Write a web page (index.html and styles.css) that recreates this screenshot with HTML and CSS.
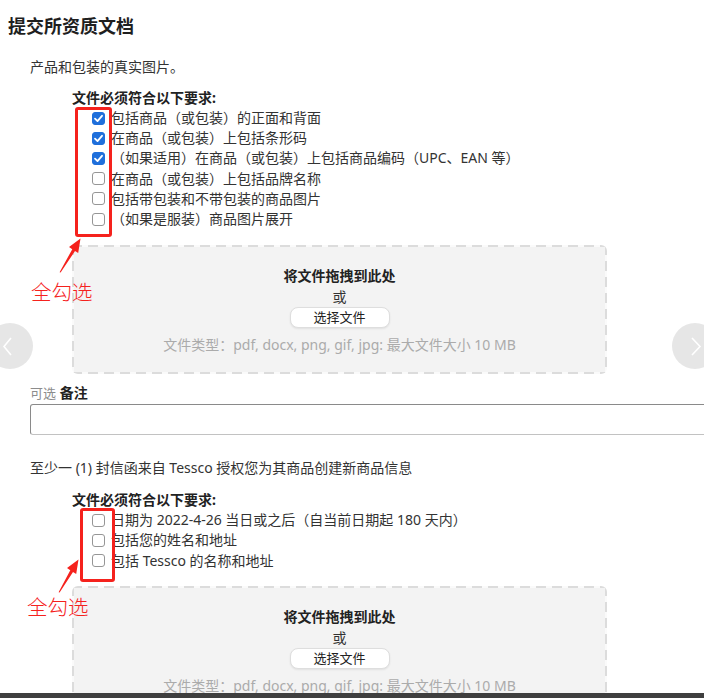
FILE: index.html
```html
<!DOCTYPE html>
<html lang="zh-CN">
<head>
<meta charset="utf-8">
<title>提交所资质文档</title>
<link rel="stylesheet" href="styles.css">
</head>
<body>
<div class="page">
  <h1 class="title">提交所资质文档</h1>

  <section class="doc">
    <p class="desc">产品和包装的真实图片。</p>
    <div class="reqs">
      <div class="reqs-title">文件必须符合以下要求:</div>
      <ul class="checklist">
        <li><span class="box checked"><svg viewBox="0 0 13 13" width="13" height="13"><polyline points="3,6.6 5.5,9.1 10,3.8" /></svg></span><span>包括商品（或包装）的正面和背面</span></li>
        <li><span class="box checked"><svg viewBox="0 0 13 13" width="13" height="13"><polyline points="3,6.6 5.5,9.1 10,3.8" /></svg></span><span>在商品（或包装）上包括条形码</span></li>
        <li><span class="box checked"><svg viewBox="0 0 13 13" width="13" height="13"><polyline points="3,6.6 5.5,9.1 10,3.8" /></svg></span><span>（如果适用）在商品（或包装）上包括商品编码（UPC、EAN 等）</span></li>
        <li><span class="box"></span><span>在商品（或包装）上包括品牌名称</span></li>
        <li><span class="box"></span><span>包括带包装和不带包装的商品图片</span></li>
        <li><span class="box"></span><span>（如果是服装）商品图片展开</span></li>
      </ul>
    </div>
    <div class="dropzone">
      <div class="dz-title">将文件拖拽到此处</div>
      <div class="dz-or">或</div>
      <button class="dz-btn" type="button">选择文件</button>
      <div class="dz-types">文件类型：pdf, docx, png, gif, jpg: 最大文件大小 10 MB</div>
    </div>
  </section>

  <section class="note">
    <div class="note-label"><span class="optional">可选</span> <b>备注</b></div>
    <input class="note-input" type="text">
  </section>

  <section class="doc doc-letter">
    <p class="desc">至少一 (1) 封信函来自 Tessco 授权您为其商品创建新商品信息</p>
    <div class="reqs">
      <div class="reqs-title">文件必须符合以下要求:</div>
      <ul class="checklist">
        <li><span class="box"></span><span>日期为 2022-4-26 当日或之后（自当前日期起 180 天内）</span></li>
        <li><span class="box"></span><span>包括您的姓名和地址</span></li>
        <li><span class="box"></span><span>包括 Tessco 的名称和地址</span></li>
      </ul>
    </div>
    <div class="dropzone">
      <div class="dz-title">将文件拖拽到此处</div>
      <div class="dz-or">或</div>
      <button class="dz-btn" type="button">选择文件</button>
      <div class="dz-types">文件类型：pdf, docx, png, gif, jpg: 最大文件大小 10 MB</div>
    </div>
  </section>

  <!-- annotations -->
  <div class="mark mark-1"></div>
  <div class="mark mark-2"></div>
  <svg class="arrows" width="704" height="698" viewBox="0 0 704 698">
    <polygon points="80.5,238.5 69,247 72.3,249.2 59.6,272.2 60.6,272.6 75,251 78.2,253" />
    <polygon points="78.5,559.5 67,568 70.3,570.2 58.6,592.2 59.6,592.6 73,572 76.2,574" />
  </svg>
  <div class="mark-label mark-label-1">全勾选</div>
  <div class="mark-label mark-label-2">全勾选</div>

  <!-- carousel nav -->
  <div class="nav nav-prev"><svg width="46" height="46" viewBox="0 0 46 46"><path d="M24 15 L17 23.5 L24 32" /></svg></div>
  <div class="nav nav-next"><svg width="46" height="46" viewBox="0 0 46 46"><path d="M20 15 L28 23.5 L20 32" /></svg></div>

  <div class="bottom-bar"></div>
</div>
</body>
</html>
```
FILE: styles.css
```css
html, body {
  margin: 0;
  padding: 0;
  overflow: hidden;
  background: #fff;
}

body {
  font-family: "Noto Sans", "Noto Sans CJK SC", sans-serif;
  font-size: 14px;
  color: #333;
}

.page {
  position: relative;
  width: 704px;
  height: 698px;
  overflow: hidden;
}

.title {
  margin: 0;
  padding: 14px 0 0 8px;
  font-size: 18px;
  line-height: 24px;
  font-weight: 700;
  color: #1f1f1f;
}

.doc {
  padding-left: 30px;
}

.desc {
  margin: 19px 0 0;
  line-height: 20px;
  color: #333;
}

.reqs {
  margin: 11px 0 0 42px;
}

.reqs-title {
  font-weight: 700;
  line-height: 20px;
  color: #222;
}

.checklist {
  list-style: none;
  margin: 0;
  padding: 0 0 0 20px;
}

.checklist li {
  display: flex;
  align-items: center;
  gap: 6px;
  height: 20.2px;
  line-height: 20.2px;
  white-space: nowrap;
}

.box {
  flex: none;
  width: 13px;
  height: 13px;
  box-sizing: border-box;
  border: 1px solid #969696;
  border-radius: 3px;
  background: #fff;
  position: relative;
}

.box svg {
  position: absolute;
  left: -1px;
  top: -1px;
}

.box svg polyline {
  fill: none;
  stroke: #fff;
  stroke-width: 1.8;
  stroke-linecap: round;
  stroke-linejoin: round;
}

.box.checked {
  background: #1f6fdb;
  border-color: #1f6fdb;
}

.dropzone {
  margin: 16px 0 0 42px;
  width: 535px;
  height: 129px;
  box-sizing: border-box;
  padding-top: 19.5px;
  text-align: center;
  border-radius: 6px;
  background:
    repeating-linear-gradient(90deg, #dcdcdc 0 10px, #fafafa 10px 16px) left top / 100% 2px no-repeat,
    repeating-linear-gradient(90deg, #dcdcdc 0 10px, #fafafa 10px 16px) left bottom / 100% 2px no-repeat,
    repeating-linear-gradient(180deg, #dcdcdc 0 10px, #fafafa 10px 16px) left top / 2px 100% no-repeat,
    repeating-linear-gradient(180deg, #dcdcdc 0 10px, #fafafa 10px 16px) right top / 2px 100% no-repeat,
    #f3f3f3;
}

.dz-title {
  font-weight: 700;
  line-height: 21px;
  color: #222;
}

.dz-or {
  line-height: 21px;
  color: #333;
}

.dz-btn {
  display: block;
  margin: 0 auto;
  width: 100px;
  height: 21px;
  box-sizing: border-box;
  padding: 0;
  border: 1px solid #dedede;
  border-radius: 8px;
  background: #fff;
  box-shadow: 0 1px 2px rgba(0, 0, 0, 0.08);
  font-family: inherit;
  font-size: 13px;
  line-height: 19px;
  color: #222;
}

.dz-types {
  margin-top: 6px;
  line-height: 21px;
  color: #ababab;
}

.note {
  padding-left: 30px;
}

.note-label {
  margin-top: 9px;
  line-height: 20px;
  color: #222;
}

.optional {
  font-size: 13px;
  color: #8c8c8c;
}

.note-input {
  display: block;
  margin: 1px 0 0;
  width: 700px;
  height: 31px;
  box-sizing: border-box;
  border: 1px solid #8a8a8a;
  border-bottom-color: #c2c2c2;
  border-radius: 3px;
  background: #fff;
}

.doc-letter .desc {
  margin-top: 23px;
}

.doc-letter .reqs {
  margin-top: 12px;
}

.doc-letter .dropzone {
  margin-top: 15.5px;
}

/* annotations */
.mark {
  position: absolute;
  box-sizing: border-box;
  border: 3px solid #f5221d;
  border-radius: 3px;
}

.mark-1 {
  left: 75px;
  top: 107px;
  width: 37px;
  height: 130px;
}

.mark-2 {
  left: 80px;
  top: 508px;
  width: 35px;
  height: 74px;
}

.arrows {
  position: absolute;
  left: 0;
  top: 0;
  pointer-events: none;
}

.arrows polygon {
  fill: #f5221d;
}

.mark-label {
  position: absolute;
  font-family: "Noto Sans CJK SC", sans-serif;
  font-size: 20.5px;
  font-weight: 300;
  line-height: 20px;
  color: #f5221d;
  white-space: nowrap;
}

.mark-label-1 {
  left: 31px;
  top: 281px;
}

.mark-label-2 {
  left: 27px;
  top: 596px;
}

/* carousel nav */
.nav {
  position: absolute;
  top: 323px;
  width: 46px;
  height: 46px;
  border-radius: 50%;
  background: #e6e6e6;
}

.nav svg {
  display: block;
}

.nav path {
  fill: none;
  stroke: #fff;
  stroke-width: 1.6;
}

.nav-prev {
  left: -13px;
}

.nav-next {
  left: 672px;
}

.bottom-bar {
  position: absolute;
  left: 0;
  right: 0;
  bottom: 0;
  height: 5px;
  background: #3f3f3f;
}
```
